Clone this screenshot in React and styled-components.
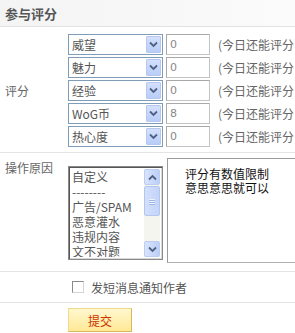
import styled, { createGlobalStyle } from "styled-components";

const GlobalStyle = createGlobalStyle`
  html, body {
    margin: 0;
    padding: 0;
    background: #fff;
    overflow: hidden;
  }
  body {
    font-family: "Noto Sans CJK SC", "DejaVu Sans", sans-serif;
    font-size: 12px;
    color: #555;
  }
`;

const Panel = styled.div`
  width: 295px;
  height: 333px;
  overflow: hidden;
`;

const Header = styled.div`
  height: 26px;
  display: flex;
  align-items: center;
  padding-left: 5px;
  background: linear-gradient(to right, #f4f4f4, #fbfbfb);
  border-bottom: 1px solid #e2e2e2;
  font-size: 13px;
  font-weight: bold;
  color: #555;
`;

const Section = styled.div`
  display: grid;
  grid-template-columns: 68px 1fr;
  align-items: ${p => p.align || "center"};
  padding: ${p => p.pad || "0"};
  height: ${p => p.h}px;
  box-sizing: border-box;
  border-bottom: ${p => (p.last ? "none" : "1px solid #e4e4e4")};
`;

const Label = styled.div`
  padding-left: 5px;
  color: #666;
  font-size: 12px;
  padding-top: ${p => p.top || 0}px;
`;

const Rows = styled.div`
  display: flex;
  flex-direction: column;
  gap: 2px;
`;

const RateRow = styled.div`
  display: flex;
  align-items: center;
  height: 21px;
`;

const SelectBox = styled.div`
  width: 95px;
  height: 21px;
  box-sizing: border-box;
  border: 1px solid #7f9db9;
  display: flex;
  align-items: center;
  justify-content: space-between;
  padding: 0 1px 0 3px;
  color: #555;
  background: #fff;
`;

const DropBtn = styled.div`
  width: 15px;
  height: 17px;
  box-sizing: border-box;
  border: 1px solid #b6c8f0;
  border-radius: 1px;
  background: linear-gradient(to bottom, #d4e0fc, #b8cdf8);
  display: flex;
  align-items: center;
  justify-content: center;
`;

const NumInput = styled.div`
  width: 44px;
  height: 21px;
  box-sizing: border-box;
  margin-left: 3px;
  border: 1px solid #c4c4c4;
  border-top-color: #a8a8a8;
  border-left-color: #a8a8a8;
  padding-left: 3px;
  display: flex;
  align-items: center;
  color: #888;
  font-family: "DejaVu Sans", sans-serif;
  font-size: 11px;
`;

const Remain = styled.span`
  margin-left: 8px;
  color: #666;
  white-space: nowrap;
`;

const ReasonWrap = styled.div`
  display: flex;
  align-items: flex-start;
`;

const ListBox = styled.div`
  margin-top: 8px;
  width: 95px;
  height: 94px;
  box-sizing: border-box;
  border: 1px solid #8a8a8a;
  box-shadow: inset 1px 1px 0 #555, inset -1px -1px 0 #d8d8d8;
  padding: 2px;
  display: flex;
  background: #fff;
`;

const Options = styled.div`
  flex: 1;
  padding-left: 1px;
  display: flex;
  flex-direction: column;
  line-height: 15px;
  color: #555;
  white-space: nowrap;
  overflow: hidden;
`;

const ScrollBar = styled.div`
  width: 16px;
  display: flex;
  flex-direction: column;
  background: #f5f5ef;
`;

const ScrollBtn = styled.div`
  height: 16px;
  box-sizing: border-box;
  border: 1px solid #bccdf2;
  border-radius: 2px;
  background: linear-gradient(to right, #d9e4fc, #bccff8);
  display: flex;
  align-items: center;
  justify-content: center;
`;

const Thumb = styled.div`
  margin-top: 1px;
  height: 30px;
  box-sizing: border-box;
  border: 1px solid #b4c6f0;
  border-radius: 2px;
  background: linear-gradient(to right, #d3e0fc, #c3d4f9);
  display: flex;
  flex-direction: column;
  align-items: center;
  justify-content: center;
  gap: 1px;
`;

const Grip = styled.span`
  width: 6px;
  height: 1px;
  background: #eef3fe;
  box-shadow: 0 1px 0 #9fb5e6;
`;

const Track = styled.div`
  flex: 1;
`;

const Memo = styled.div`
  margin-left: 4px;
  width: 140px;
  height: 105px;
  flex-shrink: 0;
  box-sizing: border-box;
  border: 1px solid #b0b0b0;
  border-top-color: #9a9a9a;
  border-left-color: #9a9a9a;
  padding: 8px 0 0 17px;
  color: #111;
  font-size: 12px;
  line-height: 14px;
`;

const CheckLabel = styled.label`
  display: flex;
  align-items: center;
  padding-left: 4px;
  color: #555;
`;

const CheckBox = styled.span`
  width: 12px;
  height: 12px;
  box-sizing: border-box;
  border: 1px solid #d4d4d4;
  border-top-color: #8a8a8a;
  border-left-color: #8a8a8a;
  margin-right: 7px;
  background: #fff;
`;

const SubmitBtn = styled.button`
  width: 64px;
  height: 24px;
  padding: 0;
  border: 1px solid #efd98a;
  border-right-color: #d9b85a;
  border-bottom-color: #d9b85a;
  background: linear-gradient(to bottom, #fff7cf, #ffe996);
  color: #cc3300;
  font-family: "Noto Sans CJK SC", sans-serif;
  font-size: 12px;
  cursor: pointer;
`;

const Chevron = ({ up }) => (
  <svg width="9" height="7" viewBox="0 0 9 7">
    <path
      d={up ? "M1 5.5 L4.5 2 L8 5.5" : "M1 1.5 L4.5 5 L8 1.5"}
      fill="none"
      stroke="#4d6185"
      strokeWidth="1.8"
    />
  </svg>
);

const ratings = [
  { name: "威望", value: "0" },
  { name: "魅力", value: "0" },
  { name: "经验", value: "0" },
  { name: "WoG币", value: "8" },
  { name: "热心度", value: "0" },
];

const reasons = ["自定义", "--------", "广告/SPAM", "恶意灌水", "违规内容", "文不对题"];

const RateLine = ({ item }) => (
  <RateRow>
    <SelectBox>
      <span>{item.name}</span>
      <DropBtn>
        <Chevron />
      </DropBtn>
    </SelectBox>
    <NumInput>{item.value}</NumInput>
    <Remain>(今日还能评分</Remain>
  </RateRow>
);

export default function App() {
  return (
    <Panel>
      <GlobalStyle />
      <Header>参与评分</Header>
      <Section h={126} pad="5px 0 4px">
        <Label>评分</Label>
        <Rows>
          {ratings.map(r => (
            <RateLine key={r.name} item={r} />
          ))}
        </Rows>
      </Section>
      <Section h={119} align="start" pad="5px 0 0">
        <Label top={1}>操作原因</Label>
        <ReasonWrap>
          <ListBox>
            <Options>
              {reasons.map(r => (
                <span key={r}>{r}</span>
              ))}
            </Options>
            <ScrollBar>
              <ScrollBtn>
                <Chevron up />
              </ScrollBtn>
              <Thumb>
                <Grip />
                <Grip />
                <Grip />
              </Thumb>
              <Track />
              <ScrollBtn>
                <Chevron />
              </ScrollBtn>
            </ScrollBar>
          </ListBox>
          <Memo>
            评分有数值限制
            <br />
            意思意思就可以
          </Memo>
        </ReasonWrap>
      </Section>
      <Section h={31}>
        <span />
        <CheckLabel>
          <CheckBox />
          发短消息通知作者
        </CheckLabel>
      </Section>
      <Section h={31} last align="start" pad="5px 0 0">
        <span />
        <div>
          <SubmitBtn>提交</SubmitBtn>
        </div>
      </Section>
    </Panel>
  );
}
